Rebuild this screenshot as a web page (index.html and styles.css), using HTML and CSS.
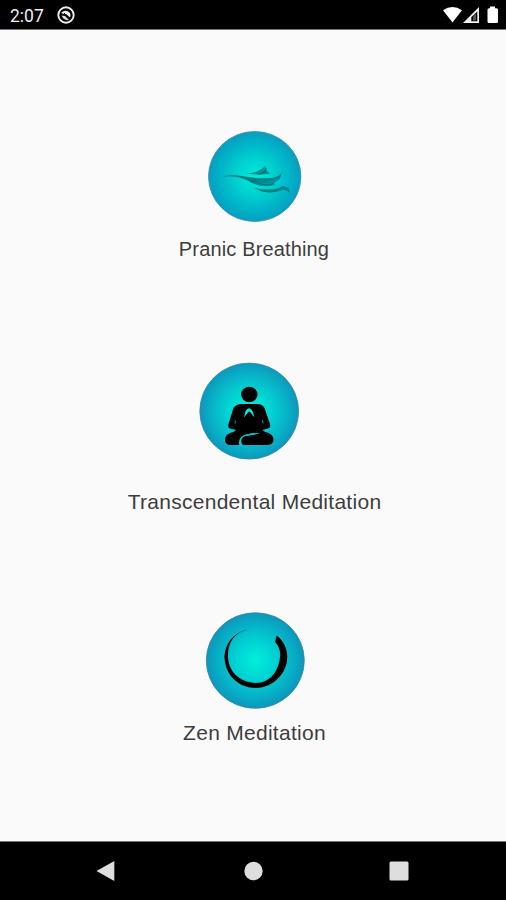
FILE: index.html
```html
<!DOCTYPE html>
<html lang="en">
<head>
<meta charset="utf-8">
<title>Meditation</title>
<link rel="stylesheet" href="styles.css">
</head>
<body>
<header class="status">
  <span class="clock">2:07</span>
  <svg class="notice" width="20" height="20" viewBox="56 5 20 20">
    <circle cx="66" cy="15" r="7.700" fill="none" stroke="#eee" stroke-width="1.900"/>
    <path d="M61 13Q65.500 8.500 70 13Q71.300 15.500 70 17.500L66 14Q64 14.500 61 13Z" fill="#eee"/>
    <path d="M61.500 15.500L65 16L69 20Q64 21 61.500 15.500Z" fill="#ddd"/>
    <path d="M64 13L71 20" fill="none" stroke="#111" stroke-width="1"/>
  </svg>
  <svg class="system" width="62" height="24" viewBox="440 3 62 24">
    <path d="M443 10.300Q452.500 3.500 462 10.300L452.500 22.500Z" fill="#fff"/>
    <path fill-rule="evenodd" d="M463 23L479 7V23ZM471.300 21.300H477.300V11.500L471.300 17.300Z" fill="#eee"/>
    <path d="M473 20.500V16.500L476 13.500V20.500Z" fill="#555"/>
    <path d="M490 6.500H495V8.300H496.500Q498 8.300 498 9.800V21.500Q498 23 496.500 23H489Q487.500 23 487.500 21.500V9.800Q487.500 8.300 489 8.300H490Z" fill="#fff"/>
  </svg>
</header>
<main class="choices">
  <section class="choice breathing">
    <svg width="94" height="92" viewBox="208 131 94 92">
      <defs>
        <radialGradient id="breath" cx="50%" cy="50%" r="52%"><stop offset="0" stop-color="#00eadb"/><stop offset=".4" stop-color="#00d0d0"/><stop offset=".78" stop-color="#00afc6"/><stop offset="1" stop-color="#0999be"/></radialGradient>
        <linearGradient id="wisp" x1="0" x2="1" y1="0" y2="1"><stop offset="0" stop-color="#0a8e91"/><stop offset=".55" stop-color="#057c80"/><stop offset="1" stop-color="#00aebc"/></linearGradient>
        <filter id="soft"><feGaussianBlur stdDeviation=".5"/></filter>
      </defs>
      <ellipse cx="254.700" cy="176.500" rx="46.200" ry="45" fill="url(#breath)" stroke="#438fa6" stroke-width=".8"/>
      <g filter="url(#soft)">
        <path d="M221 177Q232 173.500 241 176Q256 179 272 178Q280 176.500 282 172Q281 180 274 183L275 185Q263 188.500 252 183Q243 177.500 235 176.800Q228 175.500 221 177Z" fill="url(#wisp)"/>
        <path d="M246 173.500Q259 173 265.500 165.500Q265.500 171 270 173.500Q259 175.500 246 173.500Z" fill="#078e93"/>
        <path d="M254 188Q270 191 279 188Q282 185 286 187Q289.500 187 289.500 192.500Q285 188.500 280 191Q268 195 254 188Z" fill="#08858f"/>
        <path d="M241 177Q252 179 258 183Q268 187 274 183M258 174Q266 174 266 168M260 190.500Q270 193 277 190" fill="none" stroke="#07777b" stroke-width="1.200"/>
      </g>
    </svg>
    <h2>Pranic Breathing</h2>
  </section>
  <section class="choice transcendental">
    <svg width="102" height="98" viewBox="198 362 102 98">
      <defs><radialGradient id="calm" cx="50%" cy="50%" r="52%"><stop offset="0" stop-color="#00f2dd"/><stop offset=".4" stop-color="#00d6d3"/><stop offset=".75" stop-color="#08b1c7"/><stop offset="1" stop-color="#0c92b9"/></radialGradient></defs>
      <ellipse cx="249.200" cy="411.100" rx="49.400" ry="48" fill="url(#calm)" stroke="#3d86a7" stroke-width=".8"/>
      <ellipse cx="249.300" cy="394.500" rx="8.200" ry="7.800"/>
      <path d="M242 404H257Q262.500 404 264.500 408L270 424Q271 428 268 428.500L262.500 430Q265 432.500 268.500 433Q273.500 435 273.500 440Q273.500 445 266 445H244Q241 445 241 441Q241 436 248 435.500L260 433.500Q247 432.500 241.500 437Q238 440 239.500 445H231Q225 445 225 440Q225 435 230 433Q234 432.500 236 430L230 428.500Q227.500 428 228.500 424L233.500 408Q236 404 242 404Z"/>
      <path d="M244 417.500L245.500 411Q249 405.500 252.500 411L254.500 417.500L250.500 412.500Q249.200 410.500 248 412.500Z" fill="#00eadb"/>
      <path d="M239.500 445.300Q238 440 241.500 437Q247 432.500 260 433.500L248 435.500Q241 436 241.200 441Q241.200 444 243 445.300Z" fill="#00cdd0"/>
      <path d="M235 419L236 422.500L234.500 424ZM262.500 419L264 424L261.800 422Z" fill="#008b8b"/>
    </svg>
    <h2>Transcendental Meditation</h2>
  </section>
  <section class="choice zen">
    <svg width="100" height="98" viewBox="205 612 100 98">
      <defs><radialGradient id="ring" cx="50%" cy="50%" r="52%"><stop offset="0" stop-color="#00f0dc"/><stop offset=".4" stop-color="#00d2d3"/><stop offset=".75" stop-color="#07aec6"/><stop offset="1" stop-color="#0c92b9"/></radialGradient></defs>
      <ellipse cx="255.300" cy="660.500" rx="49" ry="47.800" fill="url(#ring)" stroke="#3d86a7" stroke-width=".8"/>
      <path d="M247 629.500C232 633 224 646 224.500 658C225.500 676 239 688 256 688C274 687.500 287 673 287.300 657C287.300 648 283 640 276.500 635.500L275.200 642C280 647.500 281 652.500 279.500 661C276.500 674 269 682.500 256 683C240 682.500 228.500 672 228 657C227.500 646 232 637 239 633C242 631 245 630.500 247 629.500Z"/>
    </svg>
    <h2>Zen Meditation</h2>
  </section>
</main>
<nav class="navigation">
  <svg width="22" height="24" viewBox="0 0 22 24"><path d="M1.500 12L19.300 2V22Z" fill="#dedede"/></svg>
  <svg width="20" height="20" viewBox="0 0 20 20"><circle cx="10.500" cy="10" r="9.200" fill="#dedede"/></svg>
  <svg width="20" height="20" viewBox="0 0 20 20"><rect x=".5" y=".5" width="19" height="19" rx="1.500" fill="#dedede"/></svg>
</nav>
</body>
</html>
```
FILE: styles.css
```css
* { box-sizing: border-box; }
body {
  width: 506px;
  height: 900px;
  margin: 0;
  display: flex;
  flex-direction: column;
  overflow: hidden;
  background: #fafafa;
  color: #3d3d3d;
  font-family: "Liberation Sans", Arial, sans-serif;
}
svg { display: block; flex: none; }
.status {
  height: 30px;
  display: flex;
  align-items: center;
  padding: 0 4px 0 10px;
  background: #000;
  border-bottom: 1px solid #777;
  color: #eee;
}
.clock {
  width: 46px;
  padding-top: 2px;
  font: 400 17.5px/20px Roboto, sans-serif;
}
.notice { margin-top: 1px; }
.system { margin-left: auto; }
.choices {
  height: 811px;
  display: flex;
  flex-direction: column;
  align-items: center;
  padding-top: 101px;
}
.choice {
  display: flex;
  flex-direction: column;
  align-items: center;
}
h2 {
  margin: 0;
  font-size: 21px;
  line-height: 24px;
  font-weight: 400;
  letter-spacing: .28px;
  white-space: nowrap;
}
.breathing { height: 231px; }
.breathing svg { margin-left: 4px; }
.breathing h2 { margin: 14px 0 0 2px; font-size: 20px; letter-spacing: .15px; }
.transcendental { height: 250px; }
.transcendental svg { margin-right: 8px; }
.transcendental h2 { margin: 30px 0 0 3px; }
.zen svg { margin-left: 4px; }
.zen h2 { margin: 11px 0 0 3px; }
.navigation {
  height: 59px;
  display: flex;
  align-items: center;
  justify-content: space-between;
  padding: 0 97px 0 95px;
  background: #000;
  border-top: 1px solid #777;
}
```
